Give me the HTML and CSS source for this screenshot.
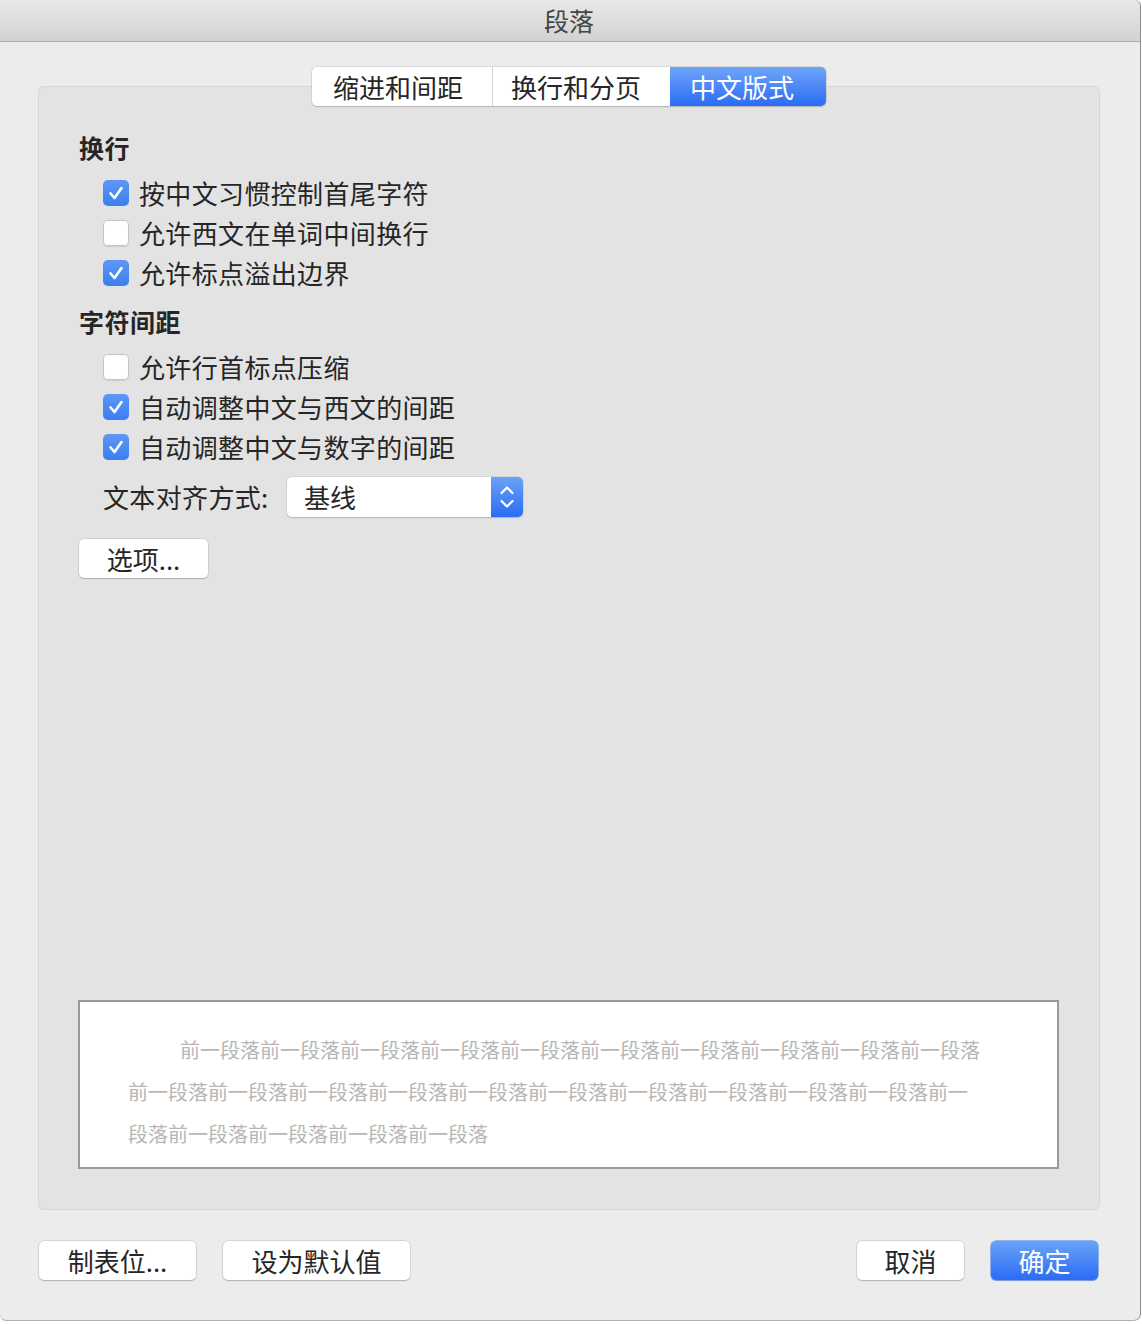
FILE: index.html
```html
<!DOCTYPE html>
<html lang="zh-CN">
<head>
<meta charset="utf-8">
<title>段落</title>
<link rel="stylesheet" href="styles.css">
</head>
<body>
<div class="window">
  <div class="titlebar">段落</div>
  <div class="group">
    <div class="tabs">
      <div class="tab tab-1">缩进和间距</div>
      <div class="tab tab-2">换行和分页</div>
      <div class="tab tab-3 active">中文版式</div>
    </div>

    <div class="heading heading-first">换行</div>
    <div class="option"><span class="cb checked"><svg viewBox="0 0 26 26"><path d="M7.5 13.5 L11.5 18 L18.5 8"/></svg></span><span>按中文习惯控制首尾字符</span></div>
    <div class="option"><span class="cb"></span><span>允许西文在单词中间换行</span></div>
    <div class="option"><span class="cb checked"><svg viewBox="0 0 26 26"><path d="M7.5 13.5 L11.5 18 L18.5 8"/></svg></span><span>允许标点溢出边界</span></div>

    <div class="heading heading-second">字符间距</div>
    <div class="option"><span class="cb"></span><span>允许行首标点压缩</span></div>
    <div class="option"><span class="cb checked"><svg viewBox="0 0 26 26"><path d="M7.5 13.5 L11.5 18 L18.5 8"/></svg></span><span>自动调整中文与西文的间距</span></div>
    <div class="option"><span class="cb checked"><svg viewBox="0 0 26 26"><path d="M7.5 13.5 L11.5 18 L18.5 8"/></svg></span><span>自动调整中文与数字的间距</span></div>

    <div class="align-row">
      <span class="align-label">文本对齐方式:</span>
      <div class="popup">
        <span class="popup-value">基线</span>
        <span class="popup-arrows"><svg viewBox="0 0 32 40"><path d="M10.5 16 L16 10.5 L21.5 16"/><path d="M10.5 24 L16 29.5 L21.5 24"/></svg></span>
      </div>
    </div>

    <div class="btn btn-options">选项...</div>

    <div class="preview">
      <p>前一段落前一段落前一段落前一段落前一段落前一段落前一段落前一段落前一段落前一段落前一段落前一段落前一段落前一段落前一段落前一段落前一段落前一段落前一段落前一段落前一段落前一段落前一段落前一段落前一段落</p>
    </div>
  </div>

  <div class="footer">
    <div class="btn btn-tabs">制表位...</div>
    <div class="btn btn-default">设为默认值</div>
    <div class="spacer"></div>
    <div class="btn btn-cancel">取消</div>
    <div class="btn btn-ok primary">确定</div>
  </div>
</div>
</body>
</html>
```

FILE: styles.css
```css
* { box-sizing: border-box; }

html, body {
  margin: 0;
  padding: 0;
  background: #ffffff;
}

body {
  font-family: "Noto Sans CJK SC", "Noto Sans", sans-serif;
  color: #262626;
  width: 1142px;
  height: 1324px;
  overflow: hidden;
}

.window {
  width: 1140px;
  height: 1320px;
  background: #ececec;
  border-radius: 0 6px 6px 6px;
  box-shadow: 1px 0 0 #8c8c8c, 0 1px 0 #b0b0b0;
  display: flex;
  flex-direction: column;
  overflow: hidden;
}

.titlebar {
  height: 42px;
  line-height: 40px;
  text-align: center;
  font-size: 25px;
  color: #454545;
  background: linear-gradient(#e9e9e9, #d2d2d2);
  border-bottom: 1px solid #acacac;
  border-radius: 0 6px 0 0;
  flex: none;
  padding-right: 2px;
}

.group {
  margin: 44px 0 0 38px;
  width: 1062px;
  height: 1124px;
  background: #e3e3e3;
  border: 1px solid #d6d6d6;
  border-radius: 6px;
  padding: 0 0 40px 40px;
  display: flex;
  flex-direction: column;
  flex: none;
}

.tabs {
  margin-top: -20px;
  align-self: center;
  margin-left: -40px;
  display: flex;
  height: 39px;
  background: #ffffff;
  border-radius: 5px;
  box-shadow: 0 0 0 0.5px #c4c4c4, 0 1px 1px rgba(0,0,0,0.25);
  overflow: hidden;
}

.tab {
  font-size: 26px;
  line-height: 39px;
  color: #262626;
}

.tab-1 { width: 181px; padding-left: 21px; border-right: 1px solid #d4d4d4; }
.tab-2 { width: 177px; padding-left: 18px; }
.tab-3 { width: 156px; padding-left: 20px; }

.tab.active {
  color: #ffffff;
  background: linear-gradient(#6fa5f9, #2a6cf5);
}

.heading {
  font-size: 25px;
  font-weight: bold;
  line-height: 36px;
  height: 36px;
  margin-bottom: 8px;
  letter-spacing: 0.5px;
}

.heading-first { margin-top: 23px; }
.heading-second { margin-top: 10px; }

.option {
  height: 40px;
  display: flex;
  align-items: center;
  margin-left: 24px;
  font-size: 26px;
  line-height: 40px;
  letter-spacing: 0.35px;
}

.cb {
  width: 26px;
  height: 26px;
  border-radius: 5px;
  background: #ffffff;
  box-shadow: inset 0 0 0 1px #c4c4c4, 0 0.5px 1px rgba(0,0,0,0.1);
  margin-right: 10px;
  flex: none;
  display: flex;
}

.cb.checked {
  background: linear-gradient(#5c98f6, #3c7ef1);
  box-shadow: none;
}

.cb svg {
  width: 26px;
  height: 26px;
}

.cb svg path {
  fill: none;
  stroke: #ffffff;
  stroke-width: 2.6;
  stroke-linecap: round;
  stroke-linejoin: round;
}

.align-row {
  margin: 10px 0 0 24px;
  display: flex;
  align-items: center;
  height: 40px;
}

.align-label {
  font-size: 26px;
  line-height: 40px;
  width: 184px;
  letter-spacing: 0.35px;
}

.popup {
  width: 236px;
  height: 40px;
  background: #ffffff;
  border-radius: 5px;
  box-shadow: 0 0 0 0.5px #c4c4c4, 0 1px 1px rgba(0,0,0,0.25);
  display: flex;
  overflow: hidden;
}

.popup-value {
  flex: 1;
  font-size: 26px;
  line-height: 40px;
  padding-left: 17px;
}

.popup-arrows {
  width: 32px;
  height: 40px;
  background: linear-gradient(#6aa2f8, #2a6cf5);
  display: flex;
}

.popup-arrows svg {
  width: 32px;
  height: 40px;
}

.popup-arrows path {
  fill: none;
  stroke: #ffffff;
  stroke-width: 2.2;
  stroke-linecap: round;
  stroke-linejoin: round;
}

.btn {
  height: 39px;
  line-height: 39px;
  font-size: 26px;
  text-align: center;
  background: #ffffff;
  border-radius: 5px;
  box-shadow: 0 0 0 0.5px #bdbdbd, 0 1px 1px rgba(0,0,0,0.28);
  color: #262626;
}

.btn-options {
  margin-top: 22px;
  width: 129px;
  align-self: flex-start;
}

.preview {
  margin-top: auto;
  margin-left: -1px;
  width: 981px;
  height: 169px;
  background: #ffffff;
  border: 2px solid #9a9a9a;
  padding: 27px 0 0 48px;
}

.preview p {
  margin: 0;
  width: 855px;
  font-size: 20px;
  line-height: 42px;
  text-indent: 52px;
  color: #b6b6b6;
  letter-spacing: 0;
}

.footer {
  margin-top: 31px;
  display: flex;
  padding: 0 42px 0 39px;
  flex: none;
}

.spacer { flex: 1; }

.btn-tabs { width: 157px; }
.btn-default { width: 187px; margin-left: 27px; }
.btn-cancel { width: 107px; }
.btn-ok { width: 107px; margin-left: 27px; }

.btn.primary {
  color: #ffffff;
  background: linear-gradient(#6aa2f8, #2a6cf5);
  box-shadow: 0 0 0 0.5px #3a78e8, 0 1px 1px rgba(0,0,0,0.2);
}
```
